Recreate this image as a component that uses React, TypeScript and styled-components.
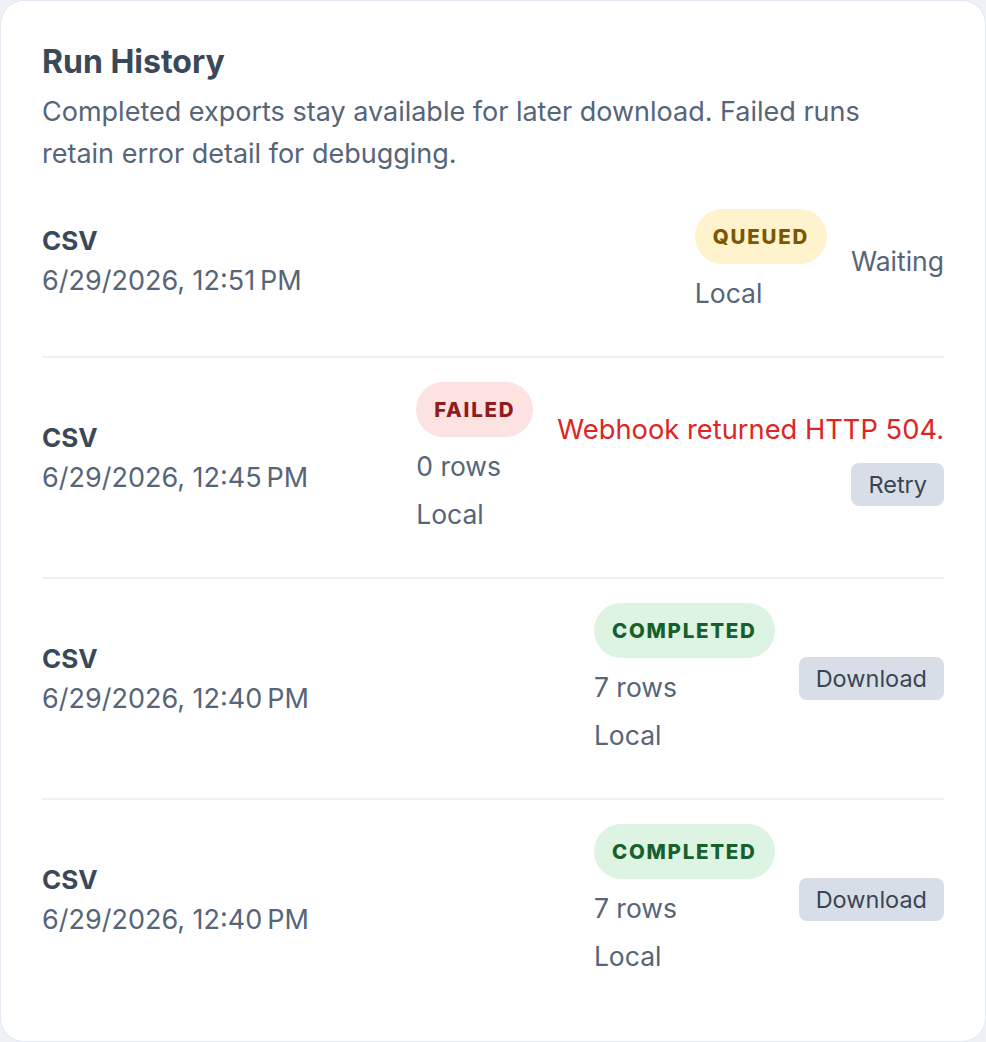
import React from 'react'
import styled, { createGlobalStyle, css } from 'styled-components'

const GlobalStyle = createGlobalStyle`
  body {
    margin: 0;
    background: #eef2f7;
    font-family: Inter, "Noto Sans", "Liberation Sans", sans-serif;
  }
`

type Tone = 'queued' | 'failed' | 'completed'

const tones = {
  queued: css`
    background: #fef3cd;
    color: #7a5700;
  `,
  failed: css`
    background: #fde2e2;
    color: #901c1c;
  `,
  completed: css`
    background: #dcf4e1;
    color: #17602d;
  `,
}

const Card = styled.section`
  box-sizing: border-box;
  width: 100%;
  background: #fff;
  border: 1px solid #e2e8f0;
  border-radius: 24px;
  padding: 40px 41px 42px;
`
const Title = styled.h2`
  margin: 0;
  font-size: 32px;
  font-weight: 700;
  color: #3a4858;
  line-height: 42px;
`
const Subtitle = styled.p`
  max-width: 850px;
  margin: 8px 0 10px;
  font-size: 27px;
  line-height: 42px;
  color: #566577;
`
const List = styled.div`
  display: flex;
  flex-direction: column;
  gap: 20px;
`
const Row = styled.div<{ $first?: boolean }>`
  display: flex;
  justify-content: space-between;
  align-items: center;
  padding: 24px 0;
  border-top: ${p => (p.$first ? 'none' : '2px solid #eef1f5')};
`
const Info = styled.div`
  display: flex;
  flex-direction: column;
`
const Format = styled.div`
  font-size: 26px;
  font-weight: 700;
  color: #3a4858;
  line-height: 40px;
`
const Time = styled.div`
  font-size: 27px;
  color: #566577;
  line-height: 40px;
`
const Side = styled.div`
  display: flex;
  align-items: center;
  gap: 24px;
`
const Meta = styled.div`
  display: flex;
  flex-direction: column;
  align-items: flex-start;
  gap: 10px;
`
const Badge = styled.span<{ $tone: Tone }>`
  display: inline-flex;
  align-items: center;
  height: 55px;
  padding: 0 18px;
  border-radius: 999px;
  font-size: 20.5px;
  font-weight: 800;
  letter-spacing: 0.085em;
  ${p => tones[p.$tone]}
`
const MetaText = styled.div`
  font-size: 26.5px;
  line-height: 38px;
  color: #566577;
`
const Actions = styled.div`
  display: flex;
  flex-direction: column;
  align-items: flex-end;
  gap: 12px;
`
const ErrorText = styled.div`
  font-size: 27.3px;
  line-height: 42px;
  color: #dc2626;
`
const Button = styled.button`
  height: 43px;
  padding: 0 17px;
  border: none;
  border-radius: 8px;
  background: #d8dee8;
  color: #3a4553;
  font-family: inherit;
  font-size: 23.5px;
  cursor: pointer;
`

type Run = {
  time: string
  tone: Tone
  rows?: number
  error?: string
  action?: string
  note?: string
}

const runs: Run[] = [
  { time: '6/29/2026, 12:51\u202fPM', tone: 'queued', note: 'Waiting' },
  { time: '6/29/2026, 12:45\u202fPM', tone: 'failed', rows: 0, error: 'Webhook returned HTTP 504.', action: 'Retry' },
  { time: '6/29/2026, 12:40\u202fPM', tone: 'completed', rows: 7, action: 'Download' },
  { time: '6/29/2026, 12:40\u202fPM', tone: 'completed', rows: 7, action: 'Download' },
]

export default function App() {
  return (
    <>
      <GlobalStyle />
      <Card>
        <Title>Run History</Title>
        <Subtitle>
          Completed exports stay available for later download. Failed runs retain error detail for debugging.
        </Subtitle>
        <List>
          {runs.map((run, i) => (
            <Row key={i} $first={i === 0}>
              <Info>
                <Format>CSV</Format>
                <Time>{run.time}</Time>
              </Info>
              <Side>
                <Meta>
                  <Badge $tone={run.tone}>{run.tone.toUpperCase()}</Badge>
                  {run.rows !== undefined && <MetaText>{run.rows} rows</MetaText>}
                  <MetaText>Local</MetaText>
                </Meta>
                <Actions>
                  {run.note && <MetaText>{run.note}</MetaText>}
                  {run.error && <ErrorText>{run.error}</ErrorText>}
                  {run.action && <Button>{run.action}</Button>}
                </Actions>
              </Side>
            </Row>
          ))}
        </List>
      </Card>
    </>
  )
}
